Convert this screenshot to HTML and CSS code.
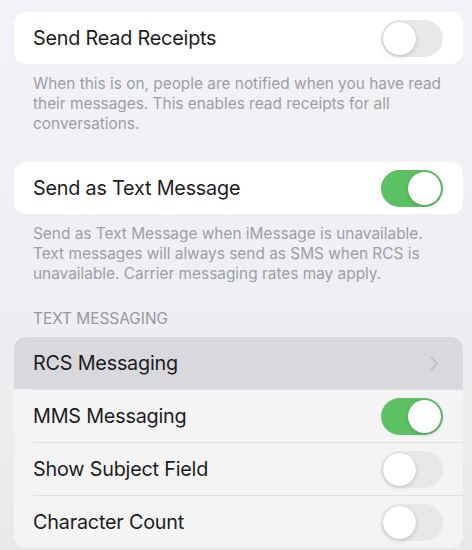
FILE: index.html
```html
<!DOCTYPE html>
<html lang="en">
<head>
<meta charset="utf-8">
<title>Messages</title>
<link rel="stylesheet" href="styles.css">
</head>
<body>
<main class="settings">
  <section class="group">
    <div class="card">
      <div class="row">
        <span class="label">Send Read Receipts</span>
        <span class="toggle"><span class="knob"></span></span>
      </div>
    </div>
    <p class="footer">When this is on, people are notified when you have read their messages. This enables read receipts for all conversations.</p>
  </section>

  <section class="group">
    <div class="card">
      <div class="row">
        <span class="label">Send as Text Message</span>
        <span class="toggle on"><span class="knob"></span></span>
      </div>
    </div>
    <p class="footer">Send as Text Message when iMessage is unavailable. Text messages will always send as SMS when RCS is unavailable. Carrier messaging rates may apply.</p>
  </section>

  <section class="group titled">
    <h2 class="header">TEXT MESSAGING</h2>
    <div class="card list">
      <div class="row pressed">
        <span class="label">RCS Messaging</span>
        <svg class="chevron" width="9" height="15" viewBox="0 0 9 15"><path d="M1.5 1.5 L7 7.5 L1.5 13.5" fill="none" stroke="currentColor" stroke-width="1.8" stroke-linecap="round" stroke-linejoin="round"/></svg>
      </div>
      <div class="row">
        <span class="label">MMS Messaging</span>
        <span class="toggle on"><span class="knob"></span></span>
      </div>
      <div class="row">
        <span class="label">Show Subject Field</span>
        <span class="toggle"><span class="knob"></span></span>
      </div>
      <div class="row">
        <span class="label">Character Count</span>
        <span class="toggle"><span class="knob"></span></span>
      </div>
    </div>
  </section>
</main>
</body>
</html>
```

FILE: styles.css
```css
html, body {
  margin: 0;
  height: 100%;
}

body {
  background: linear-gradient(#f2f2f7 0%, #efeff3 55%, #e9e9eb 100%);
  font-family: Inter, "Noto Sans", sans-serif;
  color: #1d1d1f;
  overflow: hidden;
}

.settings {
  display: flex;
  flex-direction: column;
  padding: 12px 9px 0 14px;
}

.group {
  display: flex;
  flex-direction: column;
}

.group + .group {
  margin-top: 28px;
}

.group + .group.titled {
  margin-top: 25px;
}

.card {
  background: #ffffff;
  border-radius: 12px;
  overflow: hidden;
}

.row {
  height: 52px;
  display: flex;
  align-items: center;
  justify-content: space-between;
  padding: 0 20px 0 19px;
  position: relative;
}

.label {
  font-size: 19.8px;
  letter-spacing: -0.2px;
  color: #1c1c1e;
}

.footer {
  margin: 0;
  padding: 10px 18px 0 19px;
  font-size: 15.4px;
  line-height: 20px;
  color: #9e9ea3;
}

.header {
  margin: 0 0 8px;
  padding: 0 19px;
  font-size: 15.4px;
  line-height: 20px;
  font-weight: 400;
  color: #98989d;
}

/* grouped list below the header */
.list {
  background: #f4f4f5;
}

.list .row + .row {
  border-top: 1px solid transparent;
}

.list .row + .row::before {
  content: "";
  position: absolute;
  top: -1px;
  left: 19px;
  right: 0;
  height: 1px;
  background: #dedee0;
}

.row.pressed {
  background: #d9d9dd;
}

.chevron {
  color: #bdbdc2;
  margin-right: 4px;
}

/* switches */
.toggle {
  width: 62px;
  height: 37px;
  border-radius: 19px;
  background: #e8e8ea;
  display: flex;
  align-items: center;
  padding: 2px;
  box-sizing: border-box;
}

.toggle.on {
  background: #5cc163;
  justify-content: flex-end;
}

.knob {
  width: 33px;
  height: 33px;
  border-radius: 50%;
  background: #ffffff;
  box-shadow: 0 2px 5px rgba(0, 0, 0, 0.14), 0 0 1px rgba(0, 0, 0, 0.18);
}
```
